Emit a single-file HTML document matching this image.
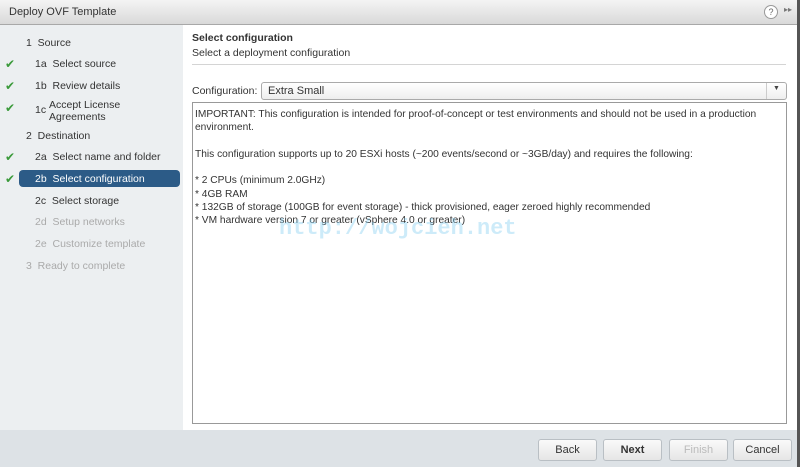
<!DOCTYPE html>
<html><head><style>
body{margin:0;width:800px;height:467px;overflow:hidden;font-family:"Liberation Sans",sans-serif;font-size:11px;color:#333;background:#fff;position:relative}
.abs{position:absolute}
#title{left:0;top:0;width:797px;height:24px;background:linear-gradient(#f4f4f4,#d9d9d9);border-bottom:1px solid #a8a8a8}
#title span{position:absolute;left:9px;top:6px;font-size:11px;color:#333}
#left{left:0;top:25px;width:183px;height:405px;background:#eceff1}
.it{position:absolute;font-size:10.5px;color:#333;white-space:nowrap}
.dim{color:#aaa}
.ck{position:absolute;left:5px;color:#3a9a3a;font-size:12px}
#sel{left:19px;top:170px;width:161px;height:17px;background:#2c5b87;border-radius:4px}
#foot{left:0;top:430px;width:797px;height:37px;background:#dde2e6}
.btn{position:absolute;top:439px;height:20px;border:1px solid #b9bfc4;border-radius:3px;background:linear-gradient(#fafafa,#e6e6e6);text-align:center;line-height:20px;font-size:11px;color:#333}
</style></head><body>
<div class="abs" id="title"><span>Deploy OVF Template</span>
<div class="abs" style="left:764px;top:5px;width:12px;height:12px;border:1px solid #999;border-radius:50%;background:#fff;font-size:9px;text-align:center;line-height:12px;color:#666">?</div>
<div class="abs" style="left:784px;top:5px;font-size:8px;color:#777">▸▸</div>
</div>
<div class="abs" style="left:797px;top:0;width:3px;height:467px;background:#555"></div>
<div class="abs" id="left"></div>
<div class="abs" id="sel"></div>
<div class="it" style="left:26px;top:37px;color:#333">1&nbsp; Source</div>
<div class="ck" style="top:57px">✔</div><div class="it" style="left:35px;top:58px">1a&nbsp; Select source</div>
<div class="ck" style="top:79px">✔</div><div class="it" style="left:35px;top:80px">1b&nbsp; Review details</div>
<div class="ck" style="top:101px">✔</div><div class="it" style="left:35px;top:104px">1c</div>
<div class="it" style="left:49px;top:99px;line-height:12px">Accept License<br>Agreements</div>
<div class="it" style="left:26px;top:130px">2&nbsp; Destination</div>
<div class="ck" style="top:150px">✔</div><div class="it" style="left:35px;top:151px">2a&nbsp; Select name and folder</div>
<div class="ck" style="top:172px">✔</div><div class="it" style="left:35px;top:173px;color:#fff">2b&nbsp; Select configuration</div>
<div class="it" style="left:35px;top:195px">2c&nbsp; Select storage</div>
<div class="it dim" style="left:35px;top:216px">2d&nbsp; Setup networks</div>
<div class="it dim" style="left:35px;top:238px">2e&nbsp; Customize template</div>
<div class="it dim" style="left:26px;top:260px">3&nbsp; Ready to complete</div>

<div class="it" style="left:192px;top:32px;font-weight:bold;font-size:10.5px">Select configuration</div>
<div class="it" style="left:192px;top:47px">Select a deployment configuration</div>
<div class="abs" style="left:192px;top:64px;width:594px;height:1px;background:#d4d4d4"></div>
<div class="it" style="left:192px;top:85px">Configuration:</div>
<div class="abs" style="left:261px;top:82px;width:524px;height:16px;border:1px solid #aaa;border-radius:3px;background:linear-gradient(#fff,#eee)">
<span style="position:absolute;left:6px;top:2px">Extra Small</span>
<div class="abs" style="left:504px;top:0;width:1px;height:16px;background:#ccc"></div>
<span style="position:absolute;left:511px;top:2px;font-size:7px;color:#444">▼</span></div>
<div class="abs" style="left:192px;top:102px;width:593px;height:320px;border:1px solid #999;background:#fff"></div>
<div class="abs" style="left:195px;top:108px;width:585px;font-size:10.2px;line-height:13.3px;color:#333">IMPORTANT: This configuration is intended for proof-of-concept or test environments and should not be used in a production<br>environment.<br><br>This configuration supports up to 20 ESXi hosts (~200 events/second or ~3GB/day) and requires the following:<br><br>* 2 CPUs (minimum 2.0GHz)<br>* 4GB RAM<br>* 132GB of storage (100GB for event storage) - thick provisioned, eager zeroed highly recommended<br>* VM hardware version 7 or greater (vSphere 4.0 or greater)</div>
<div class="abs" style="left:279px;top:216px;font-family:'Liberation Mono',monospace;font-size:22px;font-weight:bold;color:rgba(130,205,240,0.4)">http://wojcieh.net</div>

<div class="abs" id="foot"></div>
<div class="btn" style="left:538px;width:57px">Back</div>
<div class="btn" style="left:603px;width:57px;font-weight:bold">Next</div>
<div class="btn" style="left:669px;width:57px;color:#bbb">Finish</div>
<div class="btn" style="left:733px;width:57px">Cancel</div>
</body></html>
